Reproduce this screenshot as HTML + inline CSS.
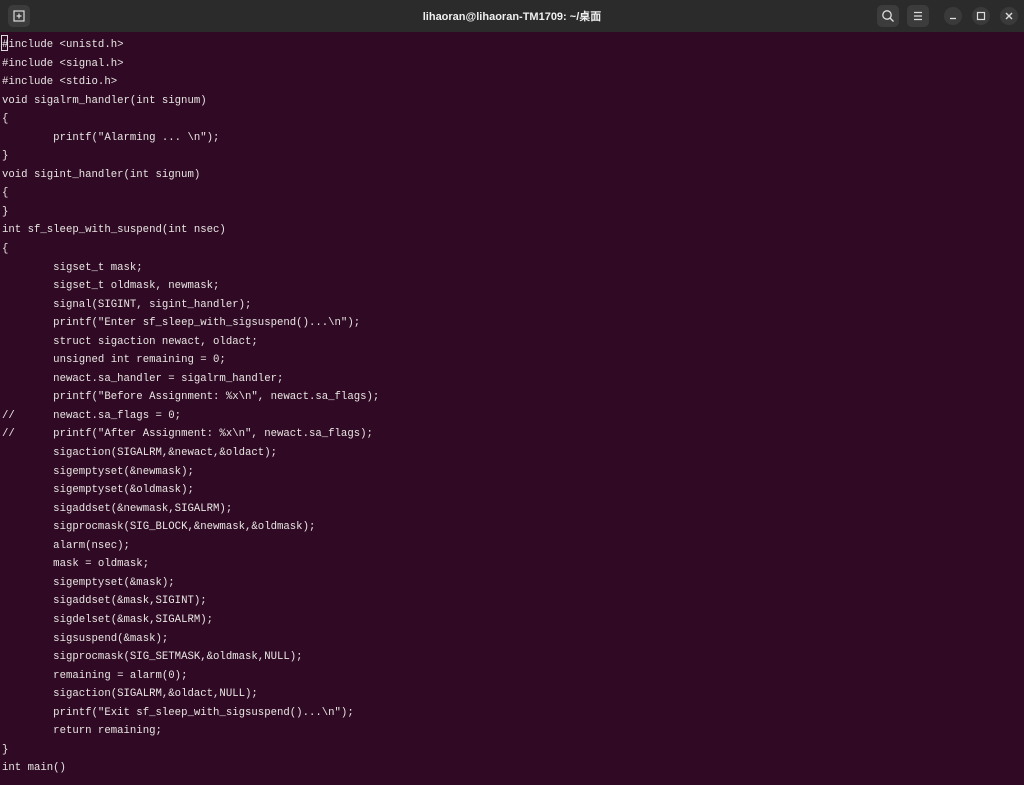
<!DOCTYPE html>
<html><head><meta charset="utf-8"><style>
html,body{margin:0;padding:0;width:1024px;height:785px;overflow:hidden;background:#300a24;}
.tb{position:absolute;left:0;top:0;width:1024px;height:32px;background:#2b2b2b;}
.title{position:absolute;left:0;right:0;top:8px;text-align:center;color:#f0f0f0;font:bold 11px "Liberation Sans","Noto Sans CJK SC",sans-serif;}
.btn{position:absolute;top:5px;width:22px;height:22px;border-radius:5px;background:#3c3c3c;}
.cb{position:absolute;top:7px;width:18px;height:18px;border-radius:50%;background:#3a3a3a;}
pre{position:absolute;left:2px;top:36px;margin:0;color:#e8e6e3;font:10.67px/18.54px "Liberation Mono",monospace;tab-size:8;-moz-tab-size:8;white-space:pre;}
.cur{position:absolute;left:1px;top:35px;width:7px;height:16px;border:1px solid #ddd;box-sizing:border-box;}
</style></head><body>
<div class="tb">
 <div class="btn" style="left:8px"><svg width="22" height="22"><rect x="6" y="6" width="10" height="10" fill="none" stroke="#ddd" stroke-width="1.2"/><path d="M11 8.5v5M8.5 11h5" stroke="#ddd" stroke-width="1.2"/></svg></div>
 <div class="title">lihaoran@lihaoran-TM1709: ~/桌面</div>
 <div class="btn" style="left:877px"><svg width="22" height="22"><circle cx="10" cy="10" r="4.2" fill="none" stroke="#ddd" stroke-width="1.3"/><path d="M13 13l3.5 3.5" stroke="#ddd" stroke-width="1.4"/></svg></div>
 <div class="btn" style="left:907px"><svg width="22" height="22"><path d="M7 7.5h8M7 11h8M7 14.5h8" stroke="#ddd" stroke-width="1.2"/></svg></div>
 <div class="cb" style="left:944px"><svg width="18" height="18"><path d="M6 11.5h6" stroke="#ddd" stroke-width="1.3"/></svg></div>
 <div class="cb" style="left:972px"><svg width="18" height="18"><rect x="5.5" y="5.5" width="7" height="7" fill="none" stroke="#ddd" stroke-width="1.2"/></svg></div>
 <div class="cb" style="left:1000px"><svg width="18" height="18"><path d="M6 6l6 6M12 6l-6 6" stroke="#ddd" stroke-width="1.4"/></svg></div>
</div>
<div class="cur"></div>
<pre>#include &lt;unistd.h&gt;
#include &lt;signal.h&gt;
#include &lt;stdio.h&gt;
void sigalrm_handler(int signum)
{
	printf("Alarming ... \n");
}
void sigint_handler(int signum)
{
}
int sf_sleep_with_suspend(int nsec)
{
	sigset_t mask;
	sigset_t oldmask, newmask;
	signal(SIGINT, sigint_handler);
	printf("Enter sf_sleep_with_sigsuspend()...\n");
	struct sigaction newact, oldact;
	unsigned int remaining = 0;
	newact.sa_handler = sigalrm_handler;
	printf("Before Assignment: %x\n", newact.sa_flags);
//	newact.sa_flags = 0;
//	printf("After Assignment: %x\n", newact.sa_flags);
	sigaction(SIGALRM,&amp;newact,&amp;oldact);
	sigemptyset(&amp;newmask);
	sigemptyset(&amp;oldmask);
	sigaddset(&amp;newmask,SIGALRM);
	sigprocmask(SIG_BLOCK,&amp;newmask,&amp;oldmask);
	alarm(nsec);
	mask = oldmask;
	sigemptyset(&amp;mask);
	sigaddset(&amp;mask,SIGINT);
	sigdelset(&amp;mask,SIGALRM);
	sigsuspend(&amp;mask);
	sigprocmask(SIG_SETMASK,&amp;oldmask,NULL);
	remaining = alarm(0);
	sigaction(SIGALRM,&amp;oldact,NULL);
	printf("Exit sf_sleep_with_sigsuspend()...\n");
	return remaining;
}
int main()</pre>
</body></html>
